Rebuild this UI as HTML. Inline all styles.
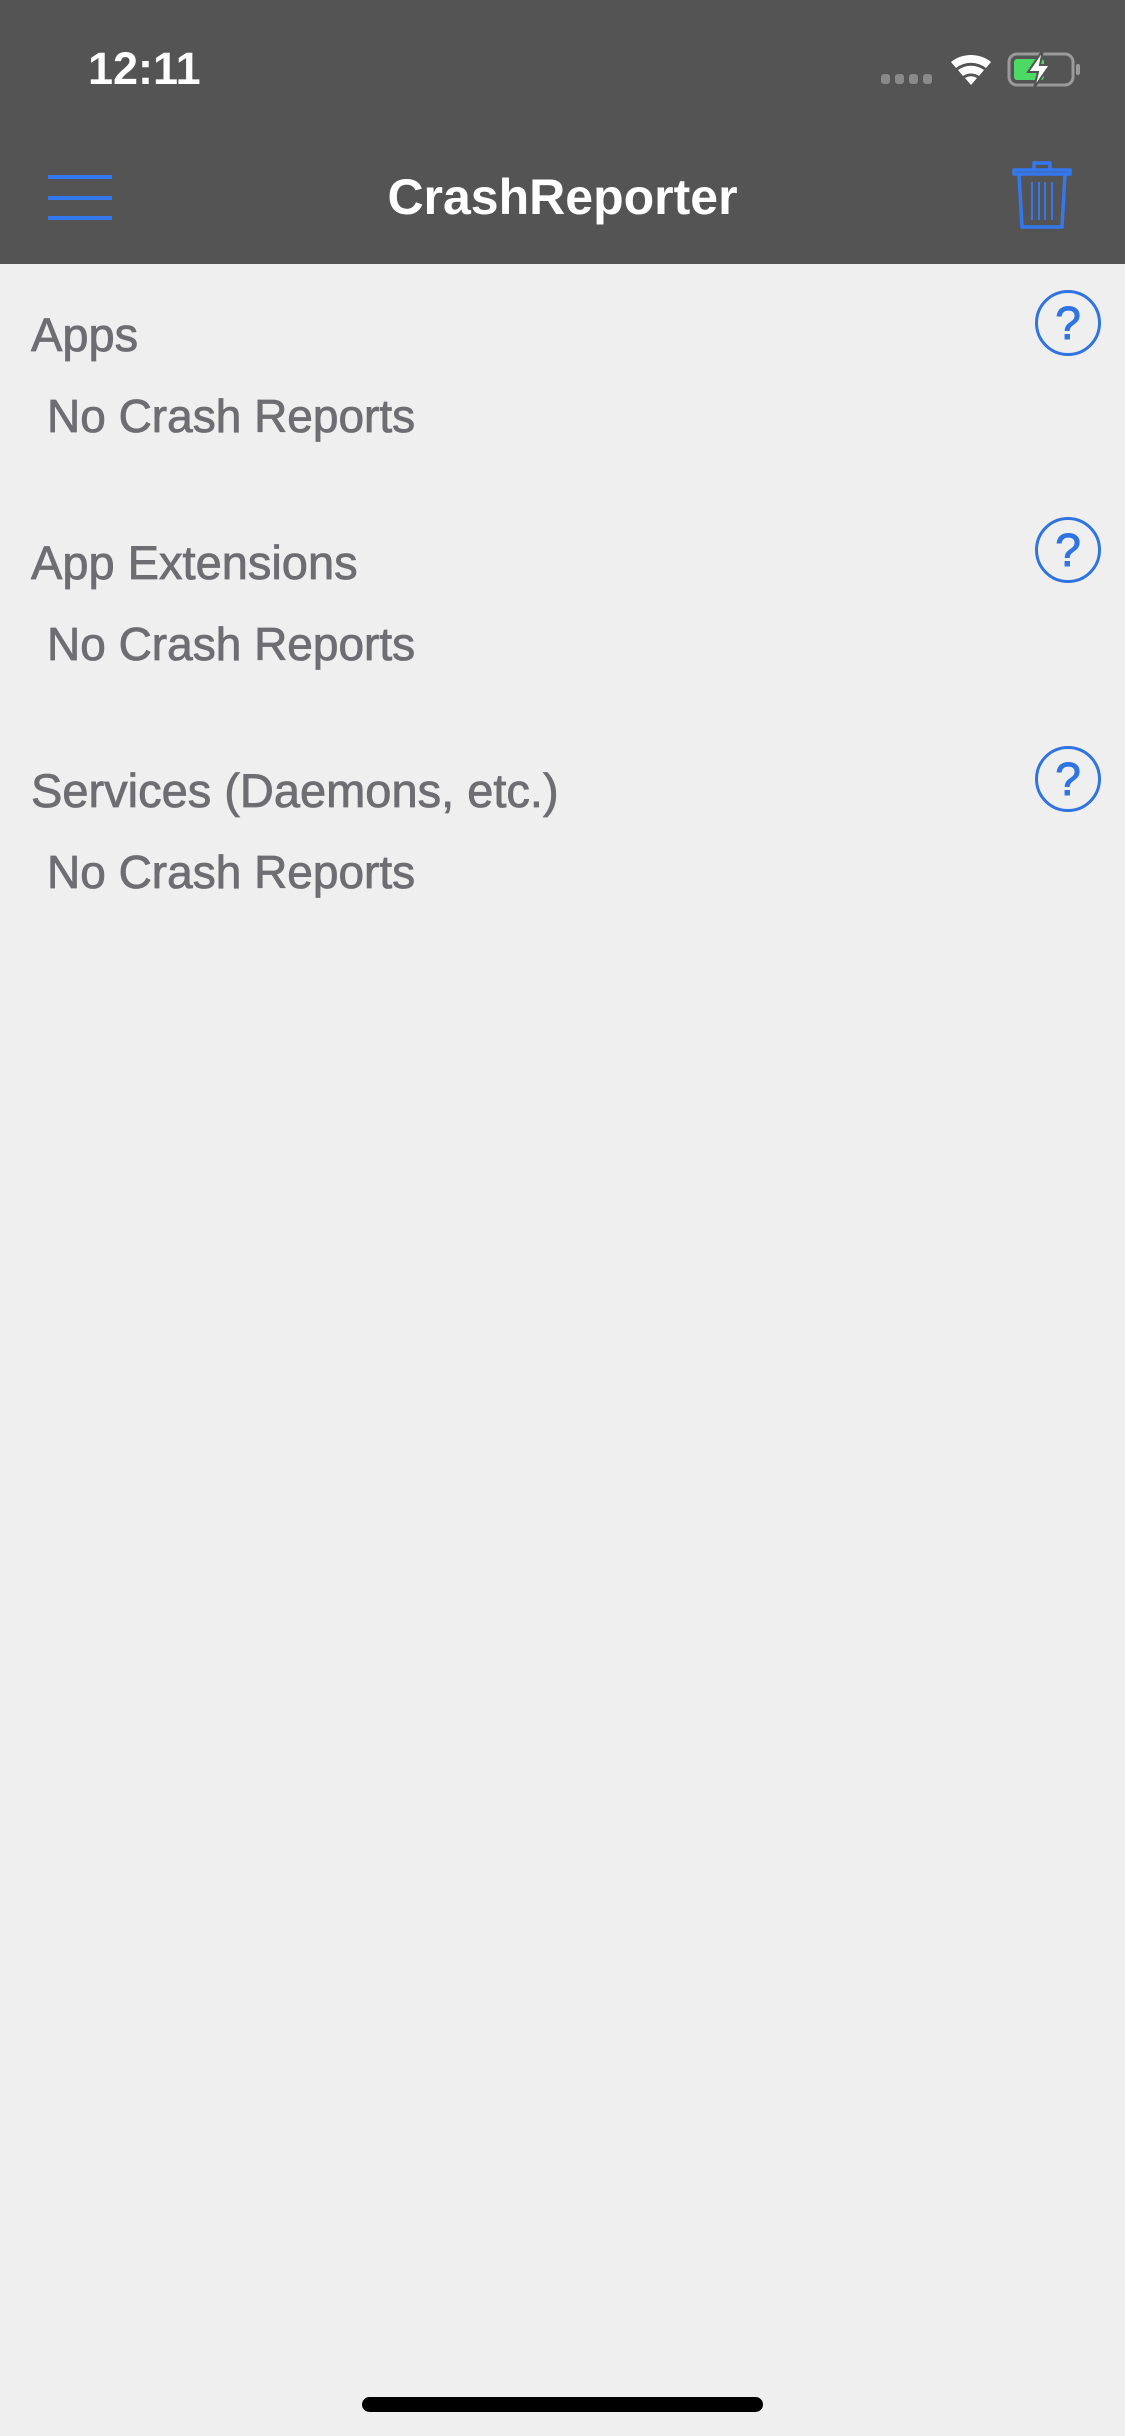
<!DOCTYPE html>
<html><head><meta charset="utf-8"><style>
html,body{margin:0;padding:0}
body{width:1125px;height:2436px;background:#efefef;position:relative;overflow:hidden;font-family:"Liberation Sans",sans-serif}
.nav{position:absolute;left:0;top:0;width:1125px;height:264px;background:#545454}
.t{position:absolute;white-space:nowrap}
.hdr{font-size:47px;color:#6d6d72;left:31px;-webkit-text-stroke:0.8px #6d6d72}
.row{font-size:46px;color:#6d6d72;left:47px;-webkit-text-stroke:0.8px #6d6d72}
.help{position:absolute;left:1035px;width:60px;height:60px;border:3px solid #2f74e0;border-radius:50%;color:#2f74e0;font-size:46px;text-align:center;line-height:60px;-webkit-text-stroke:1px #2f74e0}
.hb{position:absolute;left:48px;width:64px;height:4px;background:#3478f0}
</style></head><body>
<div class="nav"></div>
<div class="t" style="left:88px;top:43px;font-size:45px;font-weight:bold;color:#fff">12:11</div>
<svg style="position:absolute;left:878px;top:48px" width="210" height="42" viewBox="0 0 210 42">
<g fill="#8a8a8a"><rect x="3" y="26" width="9" height="10" rx="3"/><rect x="17" y="26" width="9" height="10" rx="3"/><rect x="31" y="26" width="9" height="10" rx="3"/><rect x="45" y="26" width="9" height="10" rx="3"/></g>
<path d="M73 14 A32 32 0 0 1 113 14 L108 20 A24 24 0 0 0 78 20 Z M80 22 A22 22 0 0 1 106 22 L101 28 A14 14 0 0 0 85 28 Z M87 30 A12 12 0 0 1 99 30 L93 37 Z" fill="#fff"/>
<rect x="131" y="6" width="64" height="31" rx="8" fill="none" stroke="#9a9a9a" stroke-width="3"/>
<rect x="198" y="16" width="4" height="11" rx="2" fill="#9a9a9a"/>
<rect x="136" y="11" width="30" height="21" rx="3" fill="#4cd964"/>
<path d="M165 2 L150 24 L160 24 L156 40 L172 17 L162 17 Z" fill="#fff" stroke="#545454" stroke-width="2"/>
</svg>
<div class="hb" style="top:175px"></div><div class="hb" style="top:196px"></div><div class="hb" style="top:216px"></div>
<div class="t" style="left:0;width:1125px;text-align:center;top:168px;font-size:50px;font-weight:bold;color:#fff">CrashReporter</div>
<svg style="position:absolute;left:1010px;top:158px" width="64" height="74" viewBox="0 0 64 74">
<g fill="none" stroke="#3478f0" stroke-width="3.5" stroke-linejoin="round">
<path d="M24 12 V5 H40 V12"/><path d="M4 12 H60 V16 H4 Z"/>
<path d="M9 16 L12 69 H52 L55 16"/>
<path d="M22 24 V62 M29 24 V62 M35 24 V62 M42 24 V62" stroke-width="2"/>
</g></svg>
<div class="t hdr" style="top:307px">Apps</div>
<div class="t row" style="top:389px">No Crash Reports</div>
<div class="help" style="top:290px">?</div>
<div class="t hdr" style="top:535px">App Extensions</div>
<div class="t row" style="top:617px">No Crash Reports</div>
<div class="help" style="top:517px">?</div>
<div class="t hdr" style="top:763px">Services (Daemons, etc.)</div>
<div class="t row" style="top:845px">No Crash Reports</div>
<div class="help" style="top:746px">?</div>
<div style="position:absolute;left:362px;top:2397px;width:401px;height:15px;border-radius:8px;background:#000"></div>
</body></html>
